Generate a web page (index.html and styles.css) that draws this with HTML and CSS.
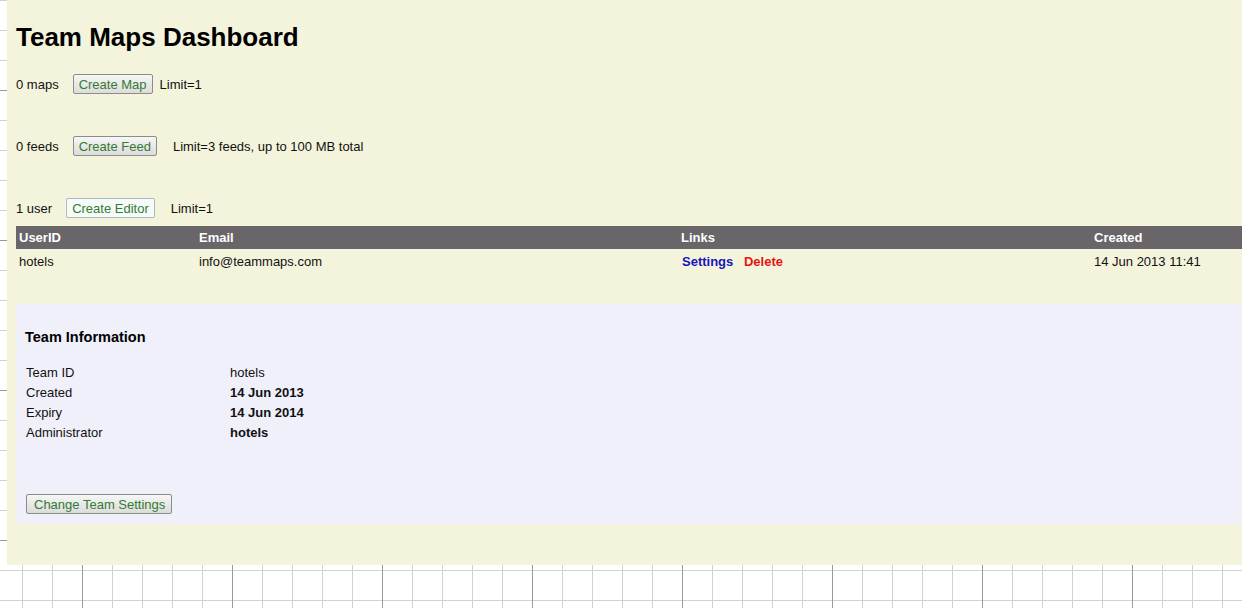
FILE: index.html
```
<!DOCTYPE html>
<html lang="en">
<head>
  <meta charset="UTF-8">
  <title>Team Maps Dashboard</title>
  <link rel="stylesheet" href="styles.css">
</head>
<body>

<div class="dashboard">
  <h1>Team Maps Dashboard</h1>

  <div class="quota-row">
    <span class="count">0 maps</span>
    <button class="btn">Create Map</button>
    <span class="limit limit-near">Limit=1</span>
  </div>

  <div class="quota-row">
    <span class="count">0 feeds</span>
    <button class="btn">Create Feed</button>
    <span class="limit">Limit=3 feeds, up to 100 MB total</span>
  </div>

  <div class="quota-row quota-last">
    <span class="count">1 user</span>
    <button class="btn btn-light">Create Editor</button>
    <span class="limit">Limit=1</span>
  </div>

  <table class="users">
    <colgroup>
      <col class="col-id">
      <col class="col-email">
      <col class="col-links">
      <col>
    </colgroup>
    <thead>
      <tr>
        <th>UserID</th>
        <th>Email</th>
        <th>Links</th>
        <th>Created</th>
      </tr>
    </thead>
    <tbody>
      <tr>
        <td>hotels</td>
        <td>info@teammaps.com</td>
        <td><a href="#" class="link-settings">Settings</a> <a href="#" class="link-delete">Delete</a></td>
        <td>14 Jun 2013 11:41</td>
      </tr>
    </tbody>
  </table>

  <div class="team-info">
    <h3>Team Information</h3>
    <div class="info-row"><span class="info-label">Team ID</span><span>hotels</span></div>
    <div class="info-row"><span class="info-label">Created</span><b>14 Jun 2013</b></div>
    <div class="info-row"><span class="info-label">Expiry</span><b>14 Jun 2014</b></div>
    <div class="info-row"><span class="info-label">Administrator</span><b>hotels</b></div>
    <button class="btn btn-settings">Change Team Settings</button>
  </div>
</div>

</body>
</html>
```

FILE: styles.css
```
html, body {
  margin: 0;
  min-height: 100%;
}

body {
  font-family: "Liberation Sans", Arial, sans-serif;
  font-size: 13px;
  color: #111;
  min-height: 608px;
  background-color: #fff;
  background-image:
    linear-gradient(to right, #9a9a9a 1px, transparent 1px),
    linear-gradient(to bottom, #9a9a9a 1px, transparent 1px),
    linear-gradient(to right, #d2d2d2 1px, transparent 1px),
    linear-gradient(to bottom, #d2d2d2 1px, transparent 1px);
  background-size: 150px 150px, 150px 150px, 30px 30px, 30px 30px;
  background-position: 82px 0, 0 90px, 22px 0, 0 0;
}

.dashboard {
  margin-left: 7px;
  padding: 22px 0 41px 9px;
  background: #f4f4dc;
}

h1 {
  margin: 0 0 22px;
  font-size: 26px;
  line-height: 30px;
  font-weight: bold;
  color: #000;
}

.quota-row {
  display: flex;
  align-items: center;
  height: 20px;
  margin-bottom: 42px;
}

.quota-last {
  margin-bottom: 8px;
}

.count {
  margin-right: 14px;
}

.limit {
  margin-left: 16px;
}

.limit-near {
  margin-left: 7px;
}

.btn {
  font-family: "Liberation Sans", Arial, sans-serif;
  font-size: 13px;
  color: #357a35;
  height: 20px;
  padding: 0 5px;
  border: 1px solid #8c8c8c;
  border-radius: 2px;
  background: linear-gradient(#f6f6f4, #dcdcda);
  cursor: pointer;
}

.btn-light {
  background: #f6faf8;
  border-color: #a9bcc4;
}

.users {
  width: 100%;
  border-collapse: collapse;
  table-layout: fixed;
}

.col-id { width: 180px; }
.col-email { width: 482px; }
.col-links { width: 413px; }

.users th {
  background: #696569;
  color: #fff;
  font-weight: bold;
  text-align: left;
  height: 23px;
  padding: 0 0 0 3px;
}

.users td {
  height: 24px;
  padding: 0 0 0 3px;
}

.users a {
  font-weight: bold;
  text-decoration: none;
}

.link-settings {
  color: #1414bf;
  margin-left: 1px;
  margin-right: 7px;
}

.link-delete {
  color: #e31414;
}

.team-info {
  margin-top: 31px;
  padding: 24px 0 10px 10px;
  background: #f0f0fa;
}

.team-info h3 {
  margin: 0 0 17px -1px;
  font-size: 14.5px;
  line-height: 18px;
  color: #000;
}

.info-row {
  display: flex;
  line-height: 20px;
}

.info-label {
  width: 204px;
}

.btn-settings {
  margin-top: 51px;
  padding: 0 6px 0 7px;
}
```
